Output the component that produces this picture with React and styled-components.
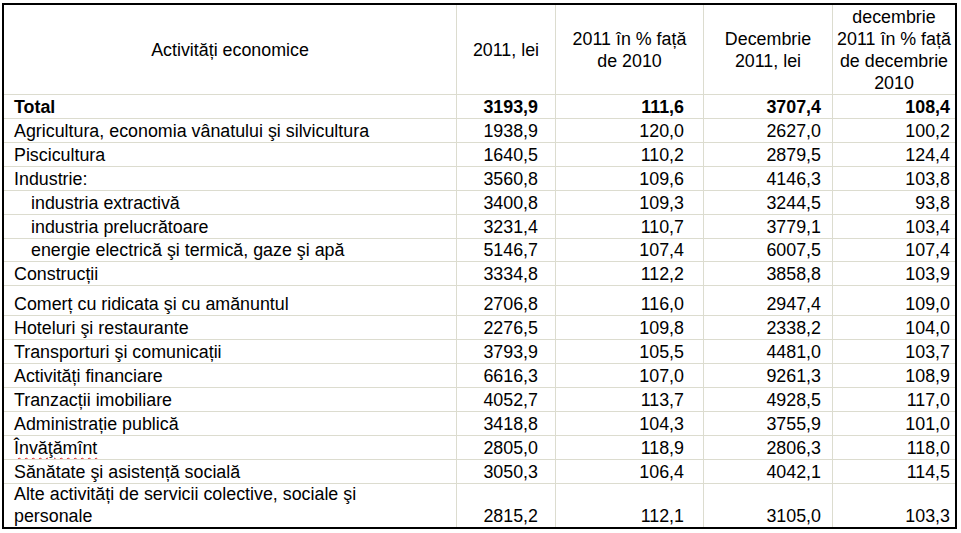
import React from "react";
import styled, { createGlobalStyle } from "styled-components";

const Global = createGlobalStyle`
  html, body { margin: 0; padding: 0; background: #ffffff; }
  body { font-family: "Liberation Sans", Arial, sans-serif; color: #000; }
`;

const COLS = "453px 99px 148px 129px 122px";
const LINE = "#dcdccf";

const Page = styled.div`
  padding: 3px 4px 0 2px;
  width: 955px;
`;

const Frame = styled.div`
  box-sizing: border-box;
  width: 955px;
  border: 2px solid #000;
  font-size: 17.85px;
  line-height: 22px;
`;

const Row = styled.div`
  display: grid;
  grid-template-columns: ${COLS};
  height: ${(p) => p.$h}px;
  box-sizing: border-box;
  border-bottom: ${(p) => (p.$last ? "none" : `1px solid ${LINE}`)};
  font-weight: ${(p) => (p.$bold ? "bold" : "normal")};
`;

const Cell = styled.div`
  box-sizing: border-box;
  display: flex;
  align-items: flex-end;
  justify-content: ${(p) => (p.$num ? "flex-end" : "flex-start")};
  border-right: ${(p) => (p.$lastCol ? "none" : `1px solid ${LINE}`)};
  padding-left: ${(p) => p.$pl || 0}px;
  padding-right: ${(p) => p.$pr || 0}px;
  padding-bottom: 0;
  white-space: nowrap;
  overflow: hidden;
`;

const HeadCell = styled.div`
  box-sizing: border-box;
  display: flex;
  align-items: center;
  justify-content: center;
  text-align: center;
  border-right: ${(p) => (p.$lastCol ? "none" : `1px solid ${LINE}`)};
  white-space: nowrap;
`;

const Spell = styled.span`
  text-decoration: underline wavy #e02020;
  text-decoration-thickness: 1px;
  text-underline-offset: 3px;
`;

const NUM_PR = [17, 19, 11, 5];

const rows = [
  { label: "Total", v: ["3193,9", "111,6", "3707,4", "108,4"], bold: true, h: 24 },
  { label: "Agricultura, economia vânatului şi silvicultura", v: ["1938,9", "120,0", "2627,0", "100,2"], h: 24 },
  { label: "Piscicultura", v: ["1640,5", "110,2", "2879,5", "124,4"], h: 24 },
  { label: "Industrie:", v: ["3560,8", "109,6", "4146,3", "103,8"], h: 24 },
  { label: "industria extractivă", v: ["3400,8", "109,3", "3244,5", "93,8"], indent: true, h: 24 },
  { label: "industria prelucrătoare", v: ["3231,4", "110,7", "3779,1", "103,4"], indent: true, h: 24 },
  { label: "energie electrică şi termică, gaze şi apă", v: ["5146,7", "107,4", "6007,5", "107,4"], indent: true, h: 23 },
  { label: "Construcții", v: ["3334,8", "112,2", "3858,8", "103,9"], h: 24 },
  { label: "Comerț cu ridicata şi cu amănuntul", v: ["2706,8", "116,0", "2947,4", "109,0"], h: 30 },
  { label: "Hoteluri şi restaurante", v: ["2276,5", "109,8", "2338,2", "104,0"], h: 24 },
  { label: "Transporturi şi comunicații", v: ["3793,9", "105,5", "4481,0", "103,7"], h: 24 },
  { label: "Activități financiare", v: ["6616,3", "107,0", "9261,3", "108,9"], h: 24 },
  { label: "Tranzacții imobiliare", v: ["4052,7", "113,7", "4928,5", "117,0"], h: 24 },
  { label: "Administrație publică", v: ["3418,8", "104,3", "3755,9", "101,0"], h: 24 },
  { label: "Învăţămînt", v: ["2805,0", "118,9", "2806,3", "118,0"], spell: true, h: 24 },
  { label: "Sănătate şi asistență socială", v: ["3050,3", "106,4", "4042,1", "114,5"], h: 24 },
  {
    label: (
      <>
        Alte activități de servicii colective, sociale şi
        <br />
        personale
      </>
    ),
    v: ["2815,2", "112,1", "3105,0", "103,3"],
    h: 43,
    last: true,
    wrap: true,
  },
];

const Label = styled.span`
  white-space: ${(p) => (p.$wrap ? "normal" : "nowrap")};
`;

export default function App() {
  return (
    <Page>
      <Global />
      <Frame>
        <Row $h={90}>
          <HeadCell>Activități economice</HeadCell>
          <HeadCell>2011, lei</HeadCell>
          <HeadCell>
            2011 în % față
            <br />
            de 2010
          </HeadCell>
          <HeadCell>
            Decembrie
            <br />
            2011, lei
          </HeadCell>
          <HeadCell $lastCol>
            decembrie
            <br />
            2011 în % față
            <br />
            de decembrie
            <br />
            2010
          </HeadCell>
        </Row>
        {rows.map((r, i) => (
          <Row key={i} $h={r.h} $bold={r.bold} $last={r.last}>
            <Cell $pl={r.indent ? 27 : 10}>
              <Label $wrap={r.wrap}>{r.spell ? <Spell>{r.label}</Spell> : r.label}</Label>
            </Cell>
            {r.v.map((val, j) => (
              <Cell key={j} $num $pr={NUM_PR[j]} $lastCol={j === 3}>
                {val}
              </Cell>
            ))}
          </Row>
        ))}
      </Frame>
    </Page>
  );
}
